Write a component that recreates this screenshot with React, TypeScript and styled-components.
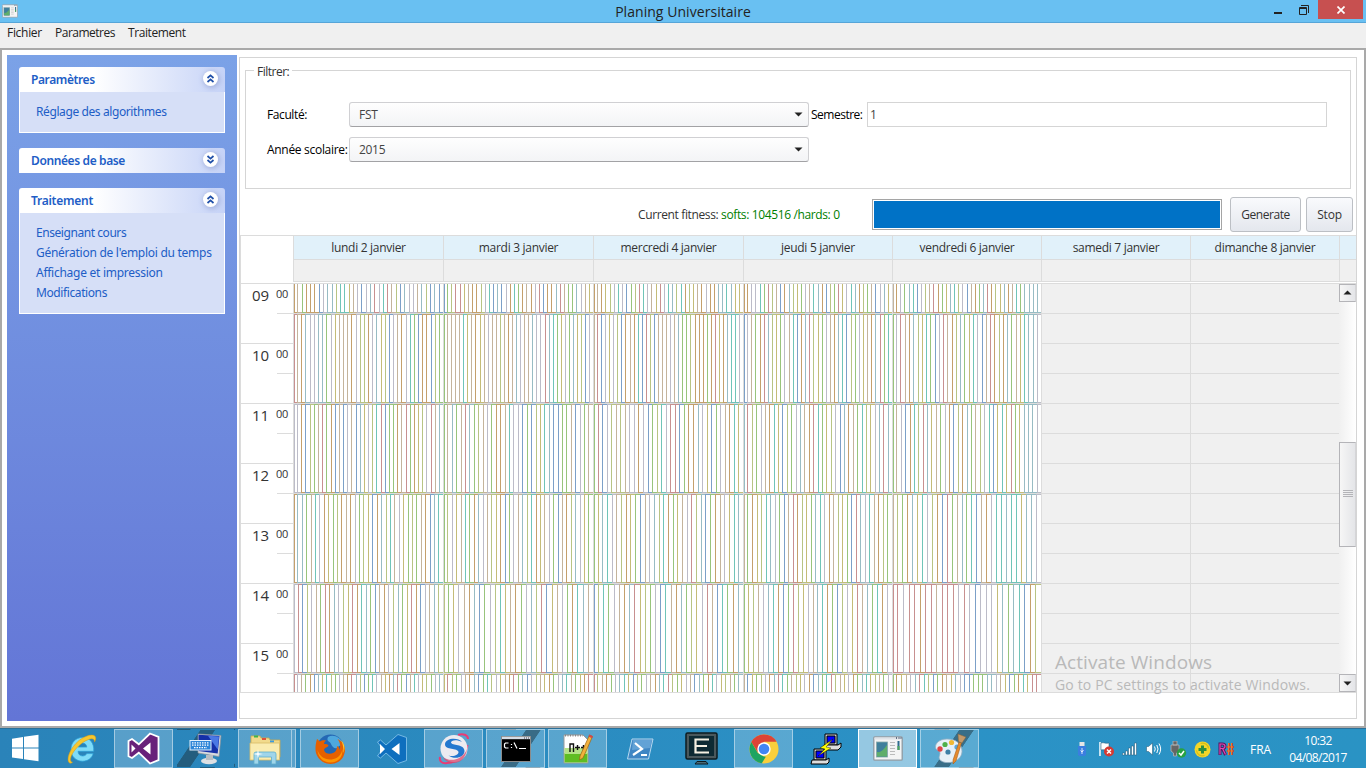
import React from "react";
import styled, { createGlobalStyle } from "styled-components";

const Global = createGlobalStyle`
  html, body { margin: 0; padding: 0; overflow: hidden; }
  *, *::before, *::after { box-sizing: border-box; }
  body { font-family: "Open Sans", "Noto Sans", sans-serif; font-size: 12px; letter-spacing: -0.3px; color: #333; }
  svg { display: block; flex: none; }
`;

/* ---------- window chrome ---------- */

const Desktop = styled.div`
  width: 1366px;
  height: 768px;
  display: flex;
  flex-direction: column;
  background: #fff;
`;

const TitleBar = styled.header`
  height: 23px;
  flex: none;
  display: flex;
  align-items: flex-start;
  background: #69c0f2;
  border-bottom: 1px solid #56a5d8;
`;

const AppIcon = styled.div`
  padding: 4px 0 0 2px;
  width: 20px;
`;

const Title = styled.h1`
  flex: 1;
  margin: 0;
  padding-left: 80px;
  text-align: center;
  font-size: 14px;
  line-height: 23px;
  font-weight: 400;
  letter-spacing: 0.05px;
  color: #222;
`;

const WindowButtons = styled.div`
  display: flex;
  height: 19px;
`;

const CaptionButton = styled.div<{ $w: number; $close?: boolean }>`
  width: ${(p) => p.$w}px;
  height: 19px;
  display: flex;
  align-items: center;
  justify-content: center;
  background: ${(p) => (p.$close ? "#c75050" : "transparent")};
`;

const MenuBar = styled.nav`
  height: 25px;
  flex: none;
  display: flex;
  gap: 14px;
  padding-left: 7px;
  background: #f0f0f0;
  line-height: 20px;
  color: #222;
`;

const MenuItem = styled.span<{ $w: number; $ls: number }>`
  width: ${(p) => p.$w}px;
  white-space: nowrap;
  letter-spacing: ${(p) => p.$ls}px;
`;

const Client = styled.main`
  height: 680px;
  flex: none;
  display: flex;
  gap: 2px;
  padding: 5px 7px 5px 5px;
  border: 2px solid #a9a9a9;
  background: #fff;
`;

/* ---------- sidebar ---------- */

const Sidebar = styled.aside`
  width: 230px;
  flex: none;
  padding: 12px;
  display: flex;
  flex-direction: column;
  gap: 15px;
  background: linear-gradient(#7ba2e7, #6375d6);
  font-family: "Noto Sans", sans-serif;
  color: #215dc6;
`;

const Group = styled.section``;

const GroupHeader = styled.div<{ $ls: number }>`
  height: 25px;
  display: flex;
  align-items: center;
  justify-content: space-between;
  padding: 0 7px 0 12px;
  border-radius: 3px 3px 0 0;
  background: linear-gradient(90deg, #fff 0%, #fff 36%, #c6d3f7 100%);
  font-weight: 600;
  letter-spacing: ${(p) => p.$ls}px;
`;

const Chevron = styled.span`
  width: 15px;
  height: 15px;
  margin-bottom: 2px;
  border-radius: 50%;
  background: #fff;
  box-shadow: 1px 1px 5px 1px #a5b4de;
`;

const GroupBody = styled.ul`
  list-style: none;
  margin: 0;
  padding: 10px 0 10px 16px;
  border: 1px solid #fff;
  border-top: 0;
  background: #d6dff7;
`;

const GroupLink = styled.li<{ $ls: number }>`
  height: 20px;
  line-height: 20px;
  white-space: nowrap;
  letter-spacing: ${(p) => p.$ls}px;
`;

/* ---------- content ---------- */

const Content = styled.div`
  flex: 1;
  height: 662px;
  margin-top: 2px;
  display: flex;
  flex-direction: column;
  border: 1px solid #d5d5d5;
`;

const FilterBox = styled.fieldset`
  height: 127px;
  flex: none;
  margin: 4px 5px 0;
  padding: 23px 0 0 21px;
  min-width: 0;
  border: 1px solid #d5d5d5;
  display: flex;
  flex-direction: column;
  gap: 10px;
`;

const Legend = styled.legend`
  margin-left: -13px;
  padding: 0 3px;
  height: 17px;
  line-height: 20px;
  letter-spacing: -0.5px;
`;

const FilterRow = styled.div`
  height: 25px;
  display: flex;
  align-items: center;
  color: #000;
`;

const FieldLabel = styled.label<{ $w: number; $ls: number; $pl?: number }>`
  width: ${(p) => p.$w}px;
  padding-left: ${(p) => p.$pl ?? 0}px;
  white-space: nowrap;
  letter-spacing: ${(p) => p.$ls}px;
`;

const Combo = styled.div`
  width: 460px;
  height: 25px;
  display: flex;
  align-items: center;
  justify-content: space-between;
  padding: 0 5px 0 9px;
  border: 1px solid #d0d0d3;
  border-bottom-color: #a2a2a5;
  border-radius: 3px;
  background: linear-gradient(#fefefe, #f3f4f6);
  color: #444;
`;

const TextInput = styled.div`
  width: 460px;
  height: 25px;
  padding-left: 2px;
  line-height: 24px;
  border: 1px solid #d5d5d5;
  color: #444;
`;

const StatusRow = styled.div`
  height: 36px;
  flex: none;
  margin: 7px 0 4px;
  display: flex;
  align-items: center;
  justify-content: flex-end;
  padding-right: 3px;
`;

const Fitness = styled.p`
  margin: 0;
  width: 234px;
  letter-spacing: -0.37px;
  white-space: nowrap;
  b { font-weight: 400; color: #008000; }
`;

const Progress = styled.div`
  width: 350px;
  height: 31px;
  padding: 1px;
  border: 1px solid #a5a5a5;
  background: #fff;
  &::before {
    content: "";
    display: block;
    height: 27px;
    background: #0072c6;
  }
`;

const Button = styled.button<{ $w: number; $ml: number; $ls: number }>`
  width: ${(p) => p.$w}px;
  height: 35px;
  margin-left: ${(p) => p.$ml}px;
  padding: 0;
  border: 1px solid #bcbfc4;
  border-radius: 3px;
  background: linear-gradient(#f9fafd, #e4e7ed);
  font: inherit;
  letter-spacing: ${(p) => p.$ls}px;
  color: #333;
`;

/* ---------- calendar ---------- */

const line = "#dcdcdc";

const Calendar = styled.section`
  width: 1116px;
  height: 458px;
  flex: none;
  margin-top: -1px;
  display: flex;
  flex-direction: column;
  border: 1px solid ${line};
  border-right: 0;
`;

const HeaderRow = styled.div<{ $h: number; $bg: string }>`
  height: ${(p) => p.$h}px;
  display: flex;
  padding-left: 52px;
  & > * {
    background: ${(p) => p.$bg};
    border-bottom: 1px solid ${line};
  }
`;

const HeaderCell = styled.div<{ $w: number }>`
  width: ${(p) => p.$w}px;
  border-left: 1px solid ${line};
  text-align: center;
  line-height: 24px;
  white-space: nowrap;
`;

const Body = styled.div`
  margin-top: 1px;
  border-top: 1px solid ${line};
  height: 409px;
  display: flex;
  overflow: hidden;
`;

const Hours = styled.div`
  width: 52px;
  flex: none;
`;

const Hour = styled.div`
  height: 60px;
  display: flex;
  padding-left: 11px;
  border-bottom: 1px solid ${line};
  font-size: 15px;
  line-height: 23px;
  letter-spacing: 0;
`;

const HourNumber = styled.span`
  width: 25px;
`;

const Half = styled.span`
  width: 16px;
  height: 30px;
  border-bottom: 1px solid ${line};
  font-size: 11px;
  line-height: 20px;
  letter-spacing: -0.3px;
  text-indent: -1px;
`;

const DayColumn = styled.div<{ $w: number; $off?: boolean }>`
  width: ${(p) => p.$w}px;
  flex: none;
  border-left: 1px solid ${line};
  background: ${(p) => (p.$off ? "#f0f0f0" : "#fff")};
`;

const EmptySlot = styled.div`
  height: 30px;
  border-bottom: 1px solid ${line};
`;

const Block = styled.div<{ $h: number }>`
  height: ${(p) => p.$h}px;
  display: flex;
  border-bottom: 1px solid ${line};
`;

const Course = styled.div<{ $c: string; $top: boolean; $n: number }>`
  flex: 1 1 0;
  border: 0 solid ${(p) => p.$c};
  border-left-width: 1px;
  border-bottom-width: 1px;
  border-top-width: ${(p) => (p.$top ? 1 : 0)}px;
  &:first-child {
    flex: 0 0 calc(${(p) => 100 / p.$n}% - 1px);
  }
`;

const ScrollBar = styled.div`
  width: 17px;
  display: flex;
  flex-direction: column;
  background: linear-gradient(90deg, #f0f0f0, #fff);
`;

const ScrollButton = styled.div`
  height: 18px;
  display: flex;
  align-items: center;
  justify-content: center;
  border: 1px solid #b4b4b8;
  border-right-color: #d5d5d8;
  background: linear-gradient(90deg, #f6f6f6, #e4e5e8);
`;

const ScrollThumb = styled(ScrollButton)`
  height: 106px;
  margin: 140px 0 127px;
`;

const Watermark = styled.div`
  position: absolute;
  left: 1055px;
  top: 650px;
  color: #b9b9b9;
  font-size: 14px;
  line-height: 21px;
  white-space: nowrap;
  letter-spacing: 0.15px;
  strong {
    display: block;
    font-weight: 400;
    font-size: 19px;
    line-height: 24px;
    letter-spacing: 0.07px;
  }
`;

/* ---------- taskbar ---------- */

const Taskbar = styled.footer`
  height: 40px;
  flex: none;
  display: flex;
  border-top: 1px solid #2a7099;
  background: linear-gradient(90deg, #2a83b9, #2b92c6 70%, #2a93c4);
  color: #fff;
`;

const StartButton = styled.div`
  width: 52px;
  padding: 5px 0 0 11px;
`;

const TaskSlot = styled.div`
  width: 62px;
  flex: none;
  display: flex;
`;

const streak = (from: number) =>
  `linear-gradient(124deg, transparent ${from}%, rgba(30,60,75,.55) ${from + 1}%, rgba(30,60,75,.55) ${from + 18}%, transparent ${from + 19}%)`;

const Task = styled.div<{ $state?: "open" | "active" | "stack"; $streak?: number }>`
  width: ${(p) => (p.$state === "stack" ? 54 : 59)}px;
  height: 39px;
  display: flex;
  align-items: center;
  justify-content: center;
  border: 1px solid
    ${(p) => (p.$state === "active" ? "#fff" : p.$state ? "rgba(255,255,255,.45)" : "transparent")};
  background-color: ${(p) =>
    p.$state === "active" ? "rgba(255,255,255,.5)" : p.$state ? "rgba(255,255,255,.22)" : "transparent"};
  background-image: ${(p) => (p.$streak ? streak(p.$streak) : "none")};
`;

const StackEdge = styled.div`
  width: 4px;
  height: 39px;
  border: 1px solid rgba(255, 255, 255, 0.45);
  border-left: 0;
  background: rgba(255, 255, 255, 0.22);
`;

const Tray = styled.div`
  flex: 1;
  display: flex;
  align-items: center;
  padding-left: 88px;
  padding-top: 1px;
`;

const TrayIcon = styled.span`
  width: 24px;
  display: flex;
  justify-content: center;
`;

const Language = styled.span`
  width: 38px;
  margin-left: 12px;
  letter-spacing: 0;
`;

const Clock = styled.div`
  width: 60px;
  text-align: center;
  line-height: 17px;
  letter-spacing: -0.6px;
`;

/* ---------- data ---------- */

const palette: Record<string, string> = {
  o: "#c4a06c",
  t: "#c4b49c",
  g: "#98c47c",
  u: "#7ca0c8",
  k: "#bcbcc8",
  s: "#98bcc4",
  l: "#b8c484",
  c: "#70c4b8",
  y: "#c4bc78",
  r: "#c89090",
};

const blockHeights = [30, 90, 90, 90, 90, 90];

const days: { label: string; w: number; blocks?: string[] }[] = [
  {
    label: "lundi 2 janvier",
    w: 150,
    blocks: [
      "otgooouksslccytkuksrkcrtluskktslusu",
      "rtoskkssgkytttoklloksyluktokcguooulg",
      "kkoulgtrgoutuktusyklcruggotrgoylkrts",
      "ossgtckoyglotokglyuoslctkyglgtousc",
      "krulktgrosklyrocsgutoklsgyrouktsl",
      "rktgousyclgktorslugcktyosrgutckylgks",
    ],
  },
  {
    label: "mardi 3 janvier",
    w: 150,
    blocks: [
      "uglrrytoolkcusukocgotokruoosrtggskty",
      "gttttcytoytkttltotskttskkrscgykgsyluk",
      "gtsgtrsgltkgootckkugulycsuuggtukgt",
      "glkytcgosktlyougktslcoytkgutolskyg",
      "lgyktosugklcytogkslruytkgocst",
      "yrlgktosugclkytorgsukltyogksctgyor",
    ],
  },
  {
    label: "mercredi 4 janvier",
    w: 150,
    blocks: [
      "otoylkckuglrcktyrkcslcolytokoosscsyy",
      "trukykluotocurlutttktsgglooogoryoscck",
      "grukltltkkokuglckrrugooskyugktocy",
      "gyscktloygutkslcogytkrlsugotkycs",
      "ulcgktosrylgkuctosglykrtucgos",
      "rltogkscyulgktoscrlgyktusgockyltgs",
    ],
  },
  {
    label: "jeudi 5 janvier",
    w: 149,
    blocks: [
      "ookkcgrltuoslygktcsoulgrykcsolgtuksy",
      "uktgorslygktcuosrlygktosculgkytosrgc",
      "srlgktocyulgkstorcgylkusotgclyksrs",
      "tgoylcskgutrolygsckotlygurskctolg",
      "gyltkscougrlyktscogulkyrtsgcok",
      "tuyglkosrcgtlykousgcrltykogscyltgk",
    ],
  },
  {
    label: "vendredi 6 janvier",
    w: 149,
    blocks: [
      "tokgscukltrogysclkutogsrolysotcgssss",
      "gkrtoslycgukrtolsgyckutrolosgtycssk",
      "gtkuoclrsytgkoulosgtlkcuycyrgysssk",
      "tlgosycklourgtsgcutokccsccyssk",
      "rrkrrorrtrrrkrkukkkysgscuol",
      "goytksrclugotyskuugggssktyugocyrr",
    ],
  },
  { label: "samedi 7 janvier", w: 149 },
  { label: "dimanche 8 janvier", w: 149 },
];

const hours = ["09", "10", "11", "12", "13", "14", "15"];

/* ---------- icons ---------- */

const Arrow = ({ up }: { up?: boolean }) => (
  <svg width="9" height="5" viewBox="0 0 9 5">
    <path d={up ? "M.5 4.5 4.5.5l4 4z" : "M.5.5h8l-4 4z"} fill="#222" />
  </svg>
);

const DoubleChevron = ({ down }: { down?: boolean }) => (
  <svg width="15" height="15" viewBox="0 0 15 15" fill="none" stroke="#1f4fa8" strokeWidth="1.7">
    <path d={down ? "M4.5 4l3 2.7 3-2.7M4.5 8l3 2.7 3-2.7" : "M4.5 7l3-2.7 3 2.7M4.5 11l3-2.7 3 2.7"} />
  </svg>
);

const WindowGlyph = ({ w, h }: { w: number; h: number }) => (
  <svg width={w} height={h} viewBox="0 0 30 25">
    <rect x=".8" y=".8" width="28.4" height="23.4" rx="1" fill="#f4f4f4" stroke="#8e9aa3" strokeWidth="1.3" />
    <path d="M1.5 2.5h27" stroke="#dfe3e8" strokeWidth="2" />
    <path d="M23 2h1m1.500 0h1m1 0h1" stroke="#3a4b66" strokeWidth="1.4" />
    <rect x="3.5" y="6" width="11" height="15" fill="#3f7f9c" stroke="#8aa" strokeWidth=".8" />
    <path d="M4 20.500V16c4 1 7-3 10-7v11.500z" fill="#5fae6a" />
    <path d="M17 6.500h5M17 9.500h5M17 12.500h5M17 15.500h5M17 18.500h5" stroke="#bbb" />
    <rect x="24.5" y="5" width="2" height="9" fill="#2f6c8f" />
    <rect x="24.5" y="10" width="2" height="4" fill="#4fa65c" />
  </svg>
);

const icons = {
  ie: (
    <svg width="32" height="32" viewBox="0 0 32 32">
      <path d="M16.500 4.500C9.500 4.500 5 9.700 5 16.500s4.800 11.700 11.500 11.700c5.500 0 9.300-3 10.700-7.600h-6.400c-.8 1.500-2.200 2.400-4.200 2.400-2.800 0-4.500-1.900-4.600-4.700h15.700C28.400 10 23.800 4.500 16.500 4.500zm-4.400 9.600c.4-2.400 2-4 4.400-4 2.500 0 4 1.600 4.300 4z" fill="#7fdcf8" stroke="#2ba0d8" strokeWidth=".7" />
      <path d="M3.500 30C-.5 27 4 15 13 7.500 20 2 28 .5 29.500 4c.6 1.500 0 3.500-1 5 .3-3-2-4-6-2.500C14 9.500 5 20 4.500 26c-.2 1.700.5 3 2 3.300-1 .9-2 1.200-3 .7z" fill="#f6c72f" stroke="#d99b13" strokeWidth=".5" />
    </svg>
  ),
  vs: (
    <svg width="33" height="33" viewBox="0 0 33 33">
      <path d="M23 1.500l8.500 3.300v23.400L23 31.500 11.800 20.700 5 26l-3.500-1.800V9L5 7l6.800 5.300z" fill="#68217a" stroke="#fff" strokeWidth="1.8" />
      <path d="M23.500 10.500v12L16 16.500zM4.500 12.500v8l4-4z" fill="#fff" />
    </svg>
  ),
  remote: (
    <svg width="34" height="32" viewBox="0 0 34 32">
      <path d="M9 1l23 1.500-2 21L9 20z" fill="#d7dade" stroke="#8b949c" strokeWidth=".7" />
      <path d="M9.500 1.800l21 1.300-1.800 17.500L9.500 18z" fill="#1530a8" />
      <path d="M19 2.800l11 .8-1.300 13z" fill="#4a78e4" />
      <ellipse cx="20" cy="28" rx="8" ry="3.300" fill="#dde0e3" />
      <path d="M17 22h7v5h-7z" fill="#b8bdc3" />
      <rect x="1" y="7.500" width="21" height="9.500" fill="#2f86d8" stroke="#e4f2ff" />
      <path d="M3 9.800h17M3 12.200h17M5 14.700h13" stroke="#fff" strokeWidth="1.2" strokeDasharray="1.5 1" />
    </svg>
  ),
  explorer: (
    <svg width="32" height="32" viewBox="0 0 32 32">
      <path d="M2 3h9l1 2h8l1 2h10v17H2z" fill="#f1da8c" stroke="#caa94f" strokeWidth=".8" />
      <path d="M5 3.500h4" stroke="#3db54a" strokeWidth="2" />
      <path d="M13 6h4" stroke="#e0513a" strokeWidth="2" />
      <path d="M21 8.500h4" stroke="#3b9be0" strokeWidth="2" />
      <path d="M1 10h29.500v17H1z" fill="#faecb0" stroke="#d8bd68" strokeWidth=".8" />
      <path d="M5 31V21q0-2 2-2h18q2 0 2 2v10h-4.500v-7h-13v7z" fill="#9fd5ea" stroke="#5faecb" strokeWidth=".8" />
      <path d="M9 16l.7 4.300 4.300.7-4.300.7L9 26l-.7-4.300L4 21l4.300-.7z" fill="#fff" />
    </svg>
  ),
  firefox: (
    <svg width="32" height="32" viewBox="0 0 32 32">
      <circle cx="16.5" cy="15" r="13.5" fill="#2468b4" />
      <path d="M14 4c5-3 13 0 15 7 0 3-3 0-5 3s-6 0-7-3-5-2-3-7z" fill="#4ea8de" />
      <path d="M3 6c1 .5 2 2 3 2.500C8 7 10 7 12 7.500c-1 1-2 2-2 3.500 2 0 4 .3 4.500 1.500-1 2-4 2-4.500 4.500 1 4 6 4.500 9 3 3-1 4-4 4-7 2 1 2.500 2.500 2.500 4 1.500-4 .5-8-2-11 5 2 8 7 7.500 12C30 26 24 31 16.500 31S2 25 1.500 17C1.300 13 2 9 3 6z" fill="#e66000" />
      <path d="M3.500 17c2 7 9 11 16 9 5-1 8-5 9-10 .5 8-4 13.500-12 13.500C9 29.500 4 24 3.500 17z" fill="#ff9500" />
      <path d="M27 7c4 4 4 9 2.500 13 .2-5-.5-9-2.500-13z" fill="#ffcb2e" />
    </svg>
  ),
  vscode: (
    <svg width="32" height="32" viewBox="0 0 32 32">
      <path d="M22 1.500l8.500 3v23L22 30.500 10 20l-5.500 5L1.500 23 6.500 16l-5-7 3-2L10 12z" fill="#0e6fbe" stroke="#7fbfe8" strokeWidth=".9" />
      <path d="M23.500 10v12L15.500 16zM4 11v10l5-5z" fill="#fff" />
    </svg>
  ),
  swirl: (
    <svg width="32" height="32" viewBox="0 0 32 32">
      <path d="M20 2c5-2 10 0 10 4M2 24c-1 4 2 7 7 6 9 0 19-8 20.500-18" fill="none" stroke="#ea3b74" strokeWidth="2" />
      <circle cx="16" cy="15.5" r="13.5" fill="#ecebf0" />
      <path d="M24 9c-4-5-17-4-17 2.500 0 6 13 3 13.500 7.500.3 3-5 5-10 3.500 6 4.500 16 2 16-4.500 0-7.500-13-5-13.500-8.500-.3-2.500 6-3.500 11-.5z" fill="#2378cf" />
      <path d="M5 24c6 5 19 4 24-8-1 9-7 14-13 14-5 0-9-2-11-6z" fill="#d9486f" opacity=".75" />
    </svg>
  ),
  cmd: (
    <svg width="30" height="26" viewBox="0 0 30 26">
      <rect x=".5" y=".5" width="29" height="25" fill="#000" stroke="#8b8b8b" />
      <path d="M1 2h28" stroke="#d6dde6" strokeWidth="2.4" />
      <path d="M23 2h1m1 0h1m1 0h1" stroke="#445" />
      <path d="M7.500 7h-3l-1 1v3l1 1h3M10.500 8v1m0 2v1M13 6.500l3 6M18 12.500h7" fill="none" stroke="#fff" strokeWidth="1.2" />
    </svg>
  ),
  notepad: (
    <svg width="32" height="32" viewBox="0 0 32 32">
      <path d="M2 2h19l5 5v23H2z" fill="#fff" stroke="#9a9a9a" />
      <path d="M2.500 20h23v9.500h-23z" fill="#5fbd22" />
      <path d="M2.500 15h23v6h-23z" fill="#b4e286" />
      <path d="M3 2.500h18" stroke="#888" strokeWidth="2" strokeDasharray="1 1.5" />
      <path d="M8 19v-8h3.500v8M13 14.500h5m-2.500-2.500v5M19 14.500h5m-2.500-2.500v5" fill="none" stroke="#111" strokeWidth="1.4" />
      <path d="M27.500 2l3 1.500L21 25l-3.500 2 .5-4z" fill="#f3b13c" stroke="#9a6414" strokeWidth=".7" />
      <path d="M27.500 1.500l3.500 1.700-1 2-3.500-1.700z" fill="#d04a4a" />
    </svg>
  ),
  powershell: (
    <svg width="30" height="24" viewBox="0 0 30 24">
      <path d="M7 2h21l-4.500 20H2.500z" fill="#3f86c4" stroke="#b6d9f0" />
      <path d="M8 3h19l-2 8-18 2z" fill="#79b5e2" opacity=".6" />
      <path d="M10 6l7 6-9 6M16 18h6" fill="none" stroke="#fff" strokeWidth="2.2" />
    </svg>
  ),
  monitor: (
    <svg width="33" height="33" viewBox="0 0 33 33">
      <rect x="1" y="1" width="31" height="26" rx="1.5" fill="#4a585c" stroke="#0c1b20" strokeWidth="1.5" />
      <rect x="4" y="4" width="25" height="20" fill="#0e2a33" />
      <path d="M24 7.500H10.500V20.500H24M11 14H22" fill="none" stroke="#f5f0e2" strokeWidth="2.2" />
      <path d="M12 29.500h9l2 2.500H10z" fill="#4a6b78" stroke="#0c1b20" />
    </svg>
  ),
  chrome: (
    <svg width="30" height="30" viewBox="0 0 30 30">
      <circle cx="15" cy="15" r="14.5" fill="#f9cf3c" />
      <path d="M15 .5A14.500 14.500 0 0 1 27.600 7.800H15L8.500 18 2.300 8A14.500 14.500 0 0 1 15 .5z" fill="#dc4437" />
      <path d="M2.300 8l6.500 11 6 3.500 2 .2-4 6.600A14.500 14.500 0 0 1 2.300 8z" fill="#1da462" />
      <circle cx="15" cy="15" r="6.7" fill="#fff" />
      <circle cx="15" cy="15" r="5.3" fill="#4285f4" />
    </svg>
  ),
  putty: (
    <svg width="32" height="32" viewBox="0 0 32 32" stroke="#000">
      <path d="M15 1h12v11H15zM4 16h12v11H4z" fill="#ccc" />
      <path d="M17 3h8v7h-8zM6 18h8v7H6z" fill="#00f" />
      <path d="M14 12h14l3-2v4l-3 3H14zM2 27h14l3-2v4l-2 2H1z" fill="#ddd" />
      <path d="M23 6l-13 9 5 1-7 7 13-8-5-1z" fill="#ff0" strokeWidth=".4" />
    </svg>
  ),
  paint: (
    <svg width="34" height="32" viewBox="0 0 34 32">
      <path d="M14 6C5 6 1 12 3 16c1 2 4 1 4 4s-2 4 0 7c5 5 21 3 22-8C29.500 11 23 6 14 6z" fill="#e6f0f7" stroke="#93afc3" strokeWidth=".8" />
      <circle cx="7" cy="16" r="2.7" fill="#e04545" />
      <circle cx="12" cy="11.5" r="2.6" fill="#4fb04a" />
      <circle cx="18.500" cy="9.5" r="2.6" fill="#efb834" />
      <circle cx="24" cy="14" r="2.6" fill="#5aa6d8" />
      <circle cx="15" cy="19" r="2.6" fill="#3c7fa6" />
      <path d="M26 9l2.500 1L23 28l-3 3 0-4z" fill="#e58a2c" stroke="#9d5716" strokeWidth=".5" />
      <path d="M25 1l8 3-4 6-3.500-1.500z" fill="#c59a6b" stroke="#8a6437" strokeWidth=".5" />
    </svg>
  ),
};

type TaskDef = { icon: React.ReactNode; state?: "open" | "active" | "stack"; streak?: number };

const tasks: TaskDef[] = [
  { icon: icons.ie },
  { icon: icons.vs, state: "open" },
  { icon: icons.remote, streak: 28 },
  { icon: icons.explorer, state: "stack" },
  { icon: icons.firefox, state: "open" },
  { icon: icons.vscode },
  { icon: icons.swirl, state: "open" },
  { icon: icons.cmd, state: "open", streak: 47 },
  { icon: icons.notepad, state: "open" },
  { icon: icons.powershell },
  { icon: icons.monitor },
  { icon: icons.chrome, state: "open" },
  { icon: icons.putty },
  { icon: <WindowGlyph w={30} h={25} />, state: "active" },
  { icon: icons.paint, state: "open", streak: 46 },
];

const trayIcons = [
  <svg key="usb" width="8" height="16" viewBox="0 0 8 16">
    <path d="M1.500 1h5v4h-5z" fill="#e6e6e6" />
    <path d="M0 5h8v8.500L7 15H1l-1-1.500z" fill="#3a7ee0" />
    <path d="M4 7v6M2.500 9.500L4 11l1.500-2" stroke="#fff" strokeWidth=".8" fill="none" />
  </svg>,
  <svg key="flag" width="17" height="16" viewBox="0 0 17 16">
    <path d="M2 1v14" stroke="#fff" strokeWidth="1.5" />
    <path d="M3 2c3-1 4 1 8 0v7c-4 1-5-1-8 0z" fill="#fff" stroke="#1c5371" strokeWidth=".5" />
    <circle cx="11" cy="10.5" r="5" fill="#d63a32" />
    <path d="M9 8.500l4 4m0-4l-4 4" stroke="#fff" strokeWidth="1.5" />
  </svg>,
  <svg key="signal" width="16" height="14" viewBox="0 0 16 14">
    <path d="M.5 11h2v2h-2zM3.500 9h2v4h-2zM6.500 6h2v7h-2zM9.500 4h2v9h-2zM12.500 1h2v12h-2z" fill="#fff" stroke="#1c5371" strokeWidth=".5" />
  </svg>,
  <svg key="speaker" width="16" height="16" viewBox="0 0 16 16" fill="none" stroke="#fff">
    <path d="M.5 5.500h2L6.500 2v12l-4-3.500h-2z" fill="#fff" stroke="#1c5371" strokeWidth=".5" />
    <path d="M8.500 5.500q1.500 2.500 0 5M10.800 4q2.500 4 0 8M13 2.500q3.300 5.500 0 11" />
  </svg>,
  <svg key="safe" width="17" height="17" viewBox="0 0 17 17">
    <path d="M3 0h4v4H3zM1 4h8v6l-2.500 2v3h-3v-3L1 10z" fill="#666" stroke="#bbb" strokeWidth=".7" />
    <circle cx="11.500" cy="12" r="4.7" fill="#27a243" />
    <path d="M9 12l2 2 3-4" stroke="#fff" strokeWidth="1.5" fill="none" />
  </svg>,
  <svg key="plus" width="17" height="17" viewBox="0 0 17 17">
    <circle cx="8.5" cy="8.5" r="8" fill="#f4d629" />
    <path d="M6.500 2.500a6 6 0 0 1 8 5M10.500 14.500a6 6 0 0 1-8-5" stroke="#d3bb1a" strokeWidth="1.2" fill="none" />
    <path d="M8.500 4.500v8M4.500 8.500h8" stroke="#2d8f3d" strokeWidth="3" />
  </svg>,
  <svg key="rsharp" width="16" height="14" viewBox="0 0 16 14" fill="none">
    <path d="M2 13V2h2.500c3.300 0 3.300 4.500 0 4.500H2M4.500 6.500L7.500 13" stroke="#54135e" strokeWidth="3" />
    <path d="M2 12.500V2h2.500c3.300 0 3.300 4.500 0 4.500H2M4.500 6.500L7.500 12.500" stroke="#e04ab0" strokeWidth="1.2" />
    <path d="M11 1v12M14 1v12M9 5h7M9 9h7" stroke="#8a2a50" strokeWidth="2" />
    <path d="M10.700 1v12M13.700 1v12M8.700 5h7M8.700 9h7" stroke="#f2862c" strokeWidth="1.2" />
  </svg>,
];

/* ---------- app ---------- */

const SideGroup = ({ title, ls, links }: { title: string; ls: number; links?: [string, number][] }) => (
  <Group>
    <GroupHeader $ls={ls}>
      {title}
      <Chevron>
        <DoubleChevron down={!links} />
      </Chevron>
    </GroupHeader>
    {links && (
      <GroupBody>
        {links.map(([text, spacing]) => (
          <GroupLink key={text} $ls={spacing}>{text}</GroupLink>
        ))}
      </GroupBody>
    )}
  </Group>
);

export default function App() {
  return (
    <Desktop>
      <Global />
      <TitleBar>
        <AppIcon>
          <WindowGlyph w={16} h={14} />
        </AppIcon>
        <Title>Planing Universitaire</Title>
        <WindowButtons>
          <CaptionButton $w={24}>
            <svg width="10" height="10" viewBox="0 0 10 10"><path d="M1 8h8" stroke="#222" strokeWidth="2" /></svg>
          </CaptionButton>
          <CaptionButton $w={28}>
            <svg width="10" height="10" viewBox="0 0 10 10" fill="none" stroke="#222">
              <path d="M.5 2.500h7v7h-7zM.5 3.500h7M2 .5h7.500V8" />
            </svg>
          </CaptionButton>
          <CaptionButton $w={45} $close>
            <svg width="8" height="8" viewBox="0 0 8 8"><path d="M.5.500l7 7m0-7l-7 7" stroke="#fff" strokeWidth="1.7" /></svg>
          </CaptionButton>
          <CaptionButton $w={3} />
        </WindowButtons>
      </TitleBar>
      <MenuBar>
        <MenuItem $w={34} $ls={-0.3}>Fichier</MenuItem>
        <MenuItem $w={59} $ls={-0.5}>Parametres</MenuItem>
        <MenuItem $w={58} $ls={-0.4}>Traitement</MenuItem>
      </MenuBar>
      <Client>
        <Sidebar>
          <SideGroup title="Paramètres" ls={-0.4} links={[["Réglage des algorithmes", -0.4]]} />
          <SideGroup title="Données de base" ls={-0.38} />
          <SideGroup
            title="Traitement"
            ls={-0.25}
            links={[
              ["Enseignant cours", -0.44],
              ["Génération de l'emploi du temps", -0.27],
              ["Affichage et impression", -0.27],
              ["Modifications", -0.4],
            ]}
          />
        </Sidebar>
        <Content>
          <FilterBox>
            <Legend>Filtrer:</Legend>
            <FilterRow>
              <FieldLabel $w={82} $ls={-0.4}>Faculté:</FieldLabel>
              <Combo>FST<Arrow /></Combo>
              <FieldLabel $w={58} $ls={-0.5} $pl={2}>Semestre:</FieldLabel>
              <TextInput>1</TextInput>
            </FilterRow>
            <FilterRow>
              <FieldLabel $w={82} $ls={-0.3}>Année scolaire:</FieldLabel>
              <Combo>2015<Arrow /></Combo>
            </FilterRow>
          </FilterBox>
          <StatusRow>
            <Fitness>Current fitness: <b>softs: 104516 /hards: 0</b></Fitness>
            <Progress />
            <Button $w={71} $ml={8} $ls={-0.45}>Generate</Button>
            <Button $w={47} $ml={5} $ls={-0.2}>Stop</Button>
          </StatusRow>
          <Calendar>
            <HeaderRow $h={24} $bg="#e1f1fa">
              {days.map((d) => <HeaderCell key={d.label} $w={d.w}>{d.label}</HeaderCell>)}
              <HeaderCell $w={17} />
            </HeaderRow>
            <HeaderRow $h={22} $bg="#f0f0f0">
              {days.map((d) => <HeaderCell key={d.label} $w={d.w} />)}
              <HeaderCell $w={17} />
            </HeaderRow>
            <Body>
              <Hours>
                {hours.map((h) => (
                  <Hour key={h}><HourNumber>{h}</HourNumber><Half>00</Half></Hour>
                ))}
              </Hours>
              {days.map((d) => (
                <DayColumn key={d.label} $w={d.w} $off={!d.blocks}>
                  {d.blocks
                    ? d.blocks.map((b, row) => (
                        <Block key={row} $h={blockHeights[row]}>
                          {b.split("").map((c, i) => (
                            <Course key={i} $c={palette[c]} $top={row > 0} $n={b.length} />
                          ))}
                        </Block>
                      ))
                    : Array.from({ length: 14 }, (_, i) => <EmptySlot key={i} />)}
                </DayColumn>
              ))}
              <ScrollBar>
                <ScrollButton><Arrow up /></ScrollButton>
                <ScrollThumb>
                  <svg width="10" height="8" viewBox="0 0 10 8"><path d="M0 .5h10M0 2.500h10M0 4.500h10M0 6.500h10" stroke="#b4b4b8" /></svg>
                </ScrollThumb>
                <ScrollButton><Arrow /></ScrollButton>
              </ScrollBar>
            </Body>
          </Calendar>
        </Content>
      </Client>
      <Taskbar>
        <StartButton>
          <svg width="28" height="28" viewBox="0 0 28 28">
            <path d="M1 4.700L12 3v10.500H1zM13 2.800L27.500.700v12.800H13zM1 14.500h11V25L1 23.500zM13 14.500h14.500v12.800L13 25.200z" fill="#fff" />
          </svg>
        </StartButton>
        {tasks.map((t, i) => (
          <TaskSlot key={i}>
            <Task $state={t.state} $streak={t.streak}>{t.icon}</Task>
            {t.state === "stack" && <StackEdge />}
          </TaskSlot>
        ))}
        <Tray>
          {trayIcons.map((icon, i) => <TrayIcon key={i}>{icon}</TrayIcon>)}
          <Language>FRA</Language>
          <Clock>10:32<br />04/08/2017</Clock>
        </Tray>
      </Taskbar>
      <Watermark><strong>Activate Windows</strong>Go to PC settings to activate Windows.</Watermark>
    </Desktop>
  );
}
